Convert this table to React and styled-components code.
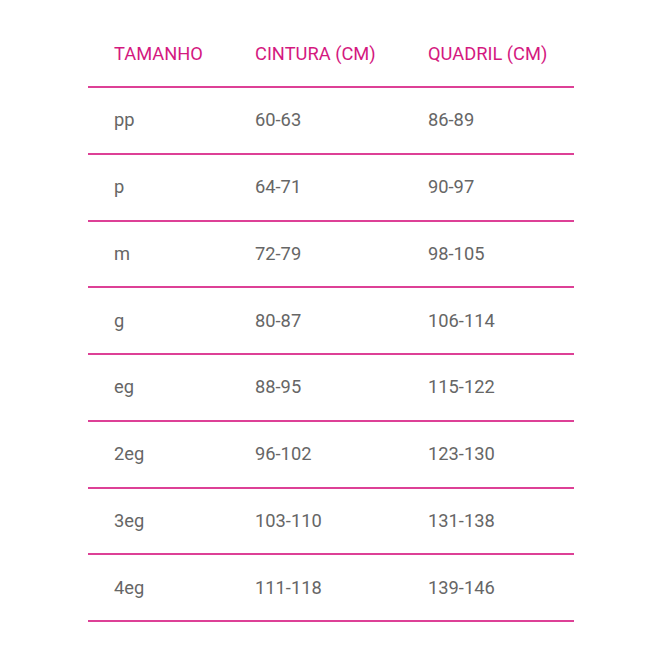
import React from "react";
import styled, { createGlobalStyle } from "styled-components";

const GlobalStyle = createGlobalStyle`
  html, body {
    margin: 0;
    padding: 0;
    background: #ffffff;
  }
  body {
    font-family: Roboto, "Liberation Sans", sans-serif;
  }
`;

const Page = styled.div`
  width: 660px;
  height: 660px;
  display: flex;
  justify-content: center;
  padding-top: 21px;
  box-sizing: border-box;
`;

const Table = styled.div`
  width: 486px;
  margin-left: 2px;
  display: flex;
  flex-direction: column;
`;

const Row = styled.div`
  display: grid;
  grid-template-columns: 141px 173px 172px;
  align-items: center;
  height: ${props => (props.head ? "67px" : "66.75px")};
  box-sizing: border-box;
  border-bottom: 2px solid #dd4096;
`;

const Cell = styled.div`
  padding-left: 26px;
  font-size: 18.3px;
  line-height: 22px;
  color: ${props => (props.head ? "#d4197f" : "#666666")};
`;

const rows = [
  ["pp", "60-63", "86-89"],
  ["p", "64-71", "90-97"],
  ["m", "72-79", "98-105"],
  ["g", "80-87", "106-114"],
  ["eg", "88-95", "115-122"],
  ["2eg", "96-102", "123-130"],
  ["3eg", "103-110", "131-138"],
  ["4eg", "111-118", "139-146"],
];

export default function App() {
  return (
    <Page>
      <GlobalStyle />
      <Table>
        <Row head>
          <Cell head>TAMANHO</Cell>
          <Cell head>CINTURA (CM)</Cell>
          <Cell head>QUADRIL (CM)</Cell>
        </Row>
        {rows.map(r => (
          <Row key={r[0]}>
            {r.map((v, i) => (
              <Cell key={i}>{v}</Cell>
            ))}
          </Row>
        ))}
      </Table>
    </Page>
  );
}
